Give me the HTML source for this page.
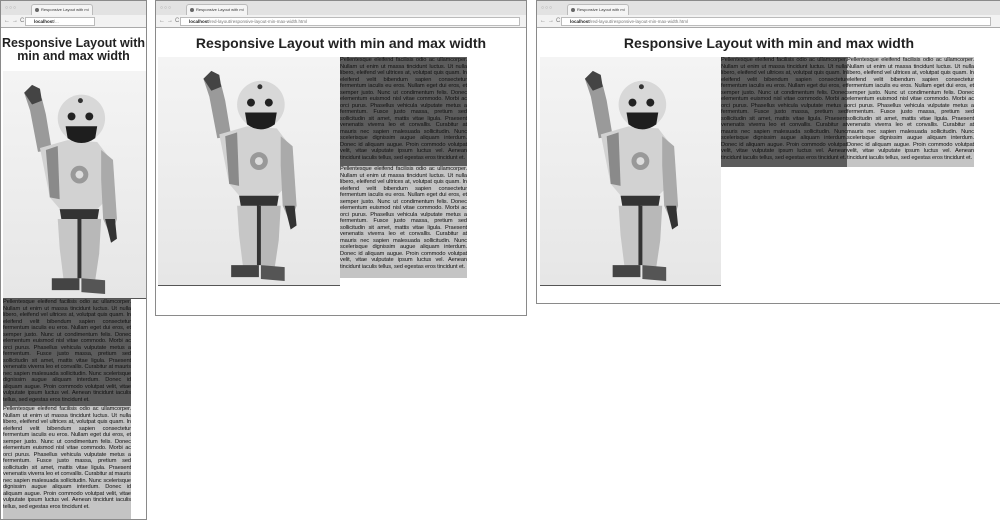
<!DOCTYPE html>
<html><head><meta charset="utf-8"><style>
*{margin:0;padding:0;box-sizing:border-box}
body{width:1000px;height:516px;background:#fff;position:relative;overflow:hidden;font-family:"Liberation Sans",sans-serif}
.win{position:absolute;border:1px solid #8a8a8a;background:#fff;overflow:hidden}
.tabs{position:absolute;left:0;right:0;top:0;height:14px;background:#e2e2e2}
.tab{position:absolute;top:3px;height:11px;width:62px;background:#f4f4f4;border:1px solid #bbb;border-bottom:none;border-radius:3px 3px 0 0;font-size:4px;line-height:10px;padding-left:9px;color:#333;white-space:nowrap;overflow:hidden}
.tab:before{content:"";position:absolute;left:3px;top:3px;width:4px;height:4px;border-radius:50%;background:#666}
.bar{position:absolute;left:0;right:0;top:14px;height:13px;background:#f2f2f2;border-bottom:1px solid #aaa}
.url{position:absolute;top:2px;height:9px;background:#fff;border:1px solid #bbb;font-size:4.5px;line-height:8px;padding-left:8px;color:#777;white-space:nowrap;overflow:hidden}
.url b{color:#222}
.nav{position:absolute;top:3px;left:3px;font-size:6px;color:#777;letter-spacing:2px}
.dots{position:absolute;left:4px;top:4px;font-size:5px;color:#999;letter-spacing:1px}
h1{position:absolute;left:0;right:0;text-align:center;font-size:14px;font-weight:bold;color:#222;line-height:16px}
.img{position:absolute;background:linear-gradient(#f4f4f4,#e6e6e6);border-bottom:1px solid #555}
.img svg{width:100%;height:100%}
.t{position:absolute;font-size:5.7px;line-height:6.5px;text-align:justify;color:#111;overflow:hidden;letter-spacing:-0.1px}
.d{background:#5c5c5c}
.l{background:#c4c4c4}
</style></head><body>
<svg width="0" height="0" style="position:absolute">
<defs>
<g id="robot">
<path d="M58,82 L50,40 L44,22 L52,18 L62,28 L66,44 L72,80 Z" fill="#9a9a9a"/>
<path d="M44,22 L52,14 L60,18 L62,30 L52,34 Z" fill="#444"/>
<path d="M60,78 L88,70 L118,72 L128,85 L128,130 L118,140 L82,142 L70,128 Z" fill="#d2d2d2"/>
<path d="M66,80 L78,76 L80,130 L70,128 Z" fill="#8a8a8a"/>
<circle cx="100" cy="105" r="9" fill="#999"/><circle cx="100" cy="105" r="4" fill="#ddd"/>
<circle cx="102" cy="48" r="24" fill="#d8d8d8"/>
<path d="M86,56 L118,56 L116,68 Q102,78 88,68 Z" fill="#1e1e1e"/>
<circle cx="92" cy="46" r="4" fill="#222"/><circle cx="110" cy="46" r="4" fill="#222"/>
<circle cx="101" cy="30" r="2.5" fill="#333"/>
<path d="M122,80 L134,90 L138,150 L132,168 L124,150 L122,110 Z" fill="#aaa"/>
<path d="M126,150 L136,150 L138,170 L132,174 Z" fill="#333"/>
<path d="M80,140 L120,140 L118,152 L82,152 Z" fill="#333"/>
<path d="M78,150 L98,150 L100,210 L84,212 L80,180 Z" fill="#c6c6c6"/>
<path d="M100,150 L122,150 L120,185 L116,212 L102,210 Z" fill="#b8b8b8"/>
<path d="M98,150 L102,150 L102,210 L98,210Z" fill="#333"/>
<path d="M72,210 L100,210 L100,222 L72,222 Z" fill="#444"/>
<path d="M102,210 L126,212 L126,226 L102,224 Z" fill="#555"/>
</g>
</defs></svg>

<!-- Window 1 -->
<div class="win" style="left:0;top:0;width:147px;height:520px">
<div class="tabs"><span class="dots">○○○</span><div class="tab" style="left:30px">Responsive Layout with mi</div></div>
<div class="bar"><span class="nav">←→C</span><div class="url" style="left:24px;width:70px"><b>localhost</b>/...</div></div>
<h1 style="top:36px;font-size:12.5px;line-height:13px">Responsive Layout with<br>min and max width</h1>
<div class="img" style="left:2px;top:70px;width:143px;height:228px"><svg viewBox="30 0 130 230"><use href="#robot"/></svg></div>
<div class="t d" style="left:2px;top:298px;width:128px;height:107px">Pellentesque eleifend facilisis odio ac ullamcorper. Nullam ut enim ut massa tincidunt luctus. Ut nulla libero, eleifend vel ultrices at, volutpat quis quam. In eleifend velit bibendum sapien consectetur fermentum iaculis eu eros. Nullam eget dui eros, et semper justo. Nunc ut condimentum felis. Donec elementum euismod nisl vitae commodo. Morbi ac orci purus. Phasellus vehicula vulputate metus a fermentum. Fusce justo massa, pretium sed sollicitudin sit amet, mattis vitae ligula. Praesent venenatis viverra leo et convallis. Curabitur at mauris nec sapien malesuada sollicitudin. Nunc scelerisque dignissim augue aliquam interdum. Donec id aliquam augue. Proin commodo volutpat velit, vitae vulputate ipsum luctus vel. Aenean tincidunt iaculis tellus, sed egestas eros tincidunt et.</div>
<div class="t l" style="left:2px;top:405px;width:128px;height:115px">Pellentesque eleifend facilisis odio ac ullamcorper. Nullam ut enim ut massa tincidunt luctus. Ut nulla libero, eleifend vel ultrices at, volutpat quis quam. In eleifend velit bibendum sapien consectetur fermentum iaculis eu eros. Nullam eget dui eros, et semper justo. Nunc ut condimentum felis. Donec elementum euismod nisl vitae commodo. Morbi ac orci purus. Phasellus vehicula vulputate metus a fermentum. Fusce justo massa, pretium sed sollicitudin sit amet, mattis vitae ligula. Praesent venenatis viverra leo et convallis. Curabitur at mauris nec sapien malesuada sollicitudin. Nunc scelerisque dignissim augue aliquam interdum. Donec id aliquam augue. Proin commodo volutpat velit, vitae vulputate ipsum luctus vel. Aenean tincidunt iaculis tellus, sed egestas eros tincidunt et.</div>
</div>

<!-- Window 2 -->
<div class="win" style="left:155px;top:0;width:372px;height:316px">
<div class="tabs"><span class="dots">○○○</span><div class="tab" style="left:30px">Responsive Layout with mi</div></div>
<div class="bar"><span class="nav">←→C</span><div class="url" style="left:24px;width:340px"><b>localhost</b>/red-layout/responsive-layout-min-max-width.html</div></div>
<h1 style="top:34px">Responsive Layout with min and max width</h1>
<div class="img" style="left:2px;top:56px;width:182px;height:229px"><svg viewBox="0 0 180 230"><use href="#robot"/></svg></div>
<div class="t d" style="left:184px;top:56px;width:127px;height:109px">Pellentesque eleifend facilisis odio ac ullamcorper. Nullam ut enim ut massa tincidunt luctus. Ut nulla libero, eleifend vel ultrices at, volutpat quis quam. In eleifend velit bibendum sapien consectetur fermentum iaculis eu eros. Nullam eget dui eros, et semper justo. Nunc ut condimentum felis. Donec elementum euismod nisl vitae commodo. Morbi ac orci purus. Phasellus vehicula vulputate metus a fermentum. Fusce justo massa, pretium sed sollicitudin sit amet, mattis vitae ligula. Praesent venenatis viverra leo et convallis. Curabitur at mauris nec sapien malesuada sollicitudin. Nunc scelerisque dignissim augue aliquam interdum. Donec id aliquam augue. Proin commodo volutpat velit, vitae vulputate ipsum luctus vel. Aenean tincidunt iaculis tellus, sed egestas eros tincidunt et.</div>
<div class="t l" style="left:184px;top:165px;width:127px;height:112px">Pellentesque eleifend facilisis odio ac ullamcorper. Nullam ut enim ut massa tincidunt luctus. Ut nulla libero, eleifend vel ultrices at, volutpat quis quam. In eleifend velit bibendum sapien consectetur fermentum iaculis eu eros. Nullam eget dui eros, et semper justo. Nunc ut condimentum felis. Donec elementum euismod nisl vitae commodo. Morbi ac orci purus. Phasellus vehicula vulputate metus a fermentum. Fusce justo massa, pretium sed sollicitudin sit amet, mattis vitae ligula. Praesent venenatis viverra leo et convallis. Curabitur at mauris nec sapien malesuada sollicitudin. Nunc scelerisque dignissim augue aliquam interdum. Donec id aliquam augue. Proin commodo volutpat velit, vitae vulputate ipsum luctus vel. Aenean tincidunt iaculis tellus, sed egestas eros tincidunt et.</div>
</div>

<!-- Window 3 -->
<div class="win" style="left:536px;top:0;width:466px;height:304px">
<div class="tabs"><span class="dots">○○○</span><div class="tab" style="left:30px">Responsive Layout with mi</div></div>
<div class="bar"><span class="nav">←→C</span><div class="url" style="left:24px;width:430px"><b>localhost</b>/red-layout/responsive-layout-min-max-width.html</div></div>
<h1 style="top:34px">Responsive Layout with min and max width</h1>
<div class="img" style="left:3px;top:56px;width:181px;height:229px"><svg viewBox="0 0 180 230"><use href="#robot"/></svg></div>
<div class="t d" style="left:184px;top:56px;width:126px;height:110px">Pellentesque eleifend facilisis odio ac ullamcorper. Nullam ut enim ut massa tincidunt luctus. Ut nulla libero, eleifend vel ultrices at, volutpat quis quam. In eleifend velit bibendum sapien consectetur fermentum iaculis eu eros. Nullam eget dui eros, et semper justo. Nunc ut condimentum felis. Donec elementum euismod nisl vitae commodo. Morbi ac orci purus. Phasellus vehicula vulputate metus a fermentum. Fusce justo massa, pretium sed sollicitudin sit amet, mattis vitae ligula. Praesent venenatis viverra leo et convallis. Curabitur at mauris nec sapien malesuada sollicitudin. Nunc scelerisque dignissim augue aliquam interdum. Donec id aliquam augue. Proin commodo volutpat velit, vitae vulputate ipsum luctus vel. Aenean tincidunt iaculis tellus, sed egestas eros tincidunt et.</div>
<div class="t l" style="left:310px;top:56px;width:127px;height:110px">Pellentesque eleifend facilisis odio ac ullamcorper. Nullam ut enim ut massa tincidunt luctus. Ut nulla libero, eleifend vel ultrices at, volutpat quis quam. In eleifend velit bibendum sapien consectetur fermentum iaculis eu eros. Nullam eget dui eros, et semper justo. Nunc ut condimentum felis. Donec elementum euismod nisl vitae commodo. Morbi ac orci purus. Phasellus vehicula vulputate metus a fermentum. Fusce justo massa, pretium sed sollicitudin sit amet, mattis vitae ligula. Praesent venenatis viverra leo et convallis. Curabitur at mauris nec sapien malesuada sollicitudin. Nunc scelerisque dignissim augue aliquam interdum. Donec id aliquam augue. Proin commodo volutpat velit, vitae vulputate ipsum luctus vel. Aenean tincidunt iaculis tellus, sed egestas eros tincidunt et.</div>
</div>
</body></html>
